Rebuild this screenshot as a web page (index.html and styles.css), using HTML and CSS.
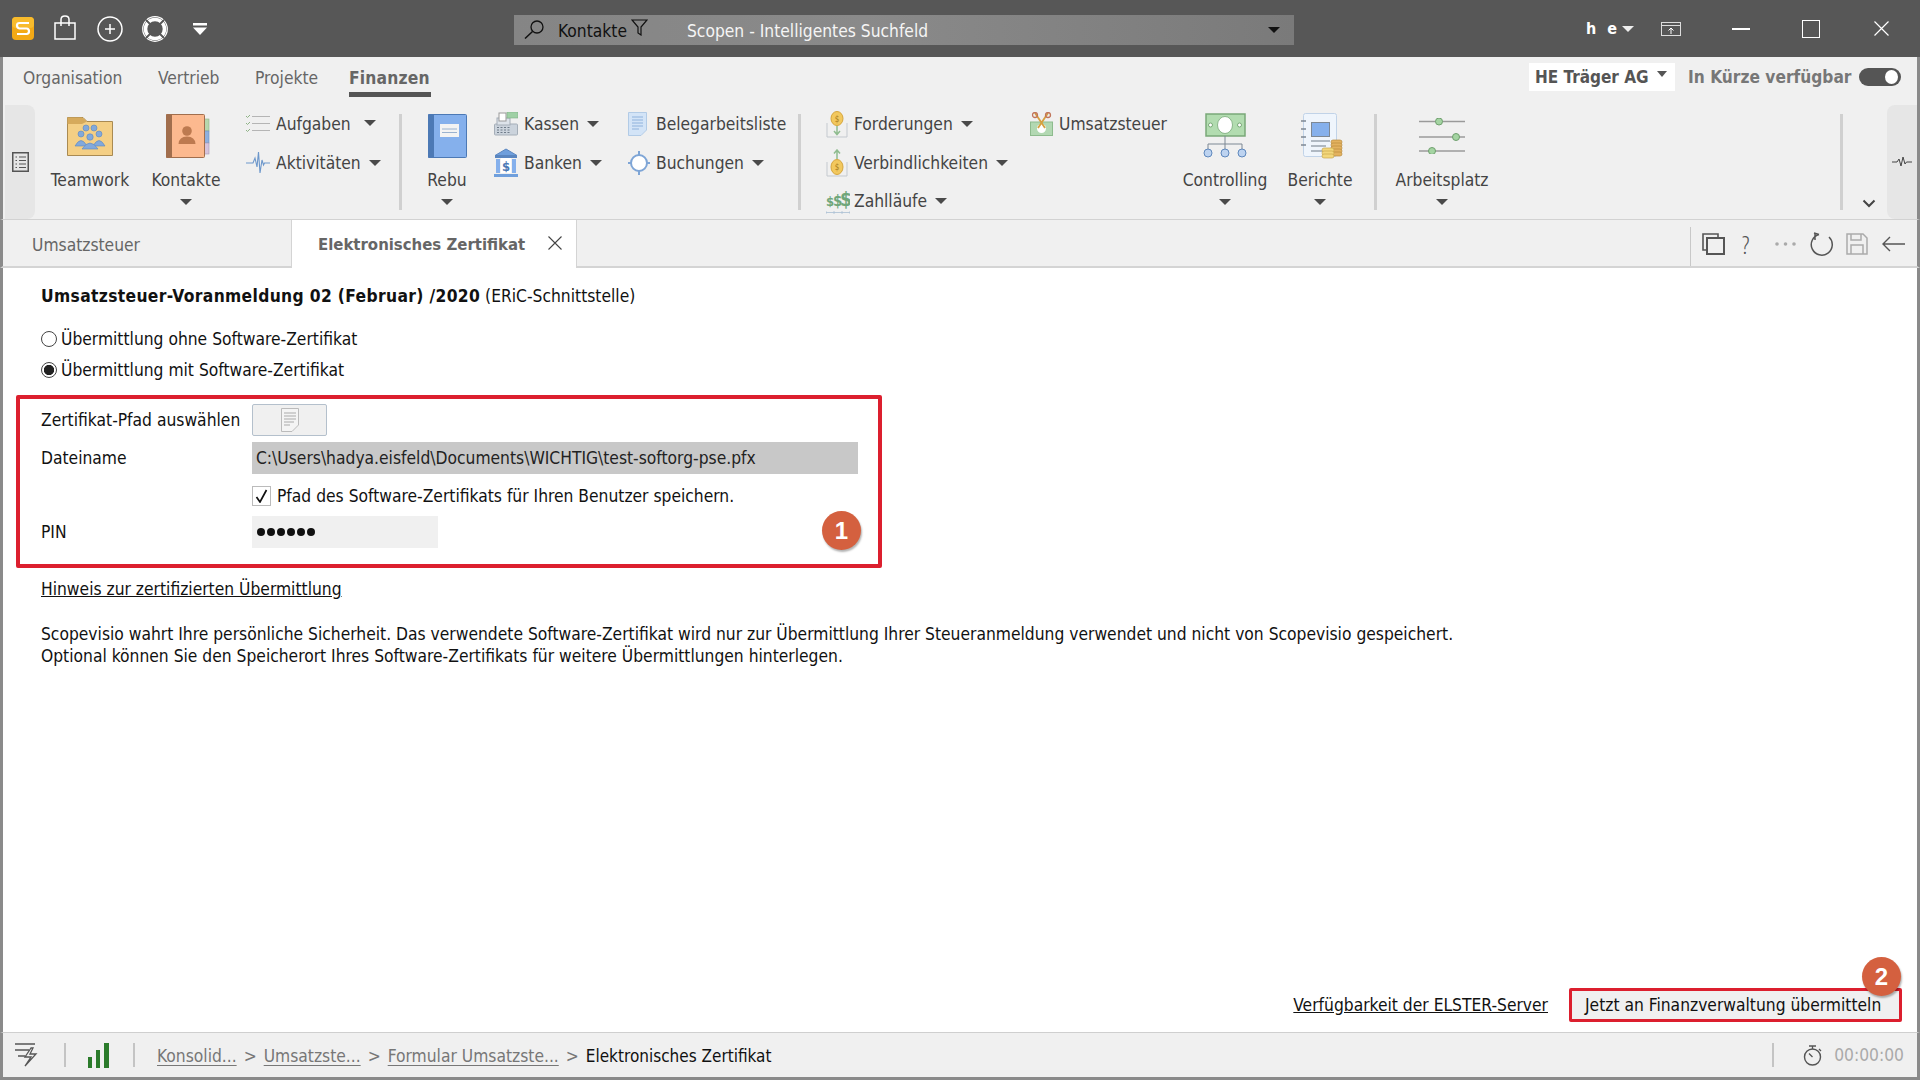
FILE: index.html
```html
<!DOCTYPE html>
<html lang="de">
<head>
<meta charset="utf-8">
<title>Elektronisches Zertifikat</title>
<link rel="stylesheet" href="styles.css">
</head>
<body>
<div class="app">
  <header class="titlebar">
    <svg class="t-logo" width="22" height="23" viewBox="0 0 22 23"><rect x="0" y="0" width="22" height="23" rx="4" fill="#f3a916"/><rect x="0" y="0" width="22" height="11" rx="4" fill="#f8bb2c"/><path d="M17 6H7.500Q5 6 5 8.500T7.500 11.500H14.500Q17 11.500 17 14.200T14.500 17H5" fill="none" stroke="#fff" stroke-width="2.200"/></svg>
    <svg class="t-bag" width="22" height="25" viewBox="0 0 22 25"><path d="M1 8H21V24H1Z M7 11V4.500Q7 1 11 1T15 4.500V11" fill="none" stroke="#fff" stroke-width="1.500"/></svg>
    <svg class="t-plus" width="26" height="26" viewBox="0 0 26 26"><circle cx="13" cy="13" r="12" fill="none" stroke="#fff" stroke-width="1.500"/><path d="M13 8V18M8 13H18" stroke="#fff" stroke-width="1.500"/></svg>
    <svg class="t-buoy" width="26" height="26" viewBox="0 0 26 26"><circle cx="13" cy="13" r="9.500" fill="none" stroke="#fff" stroke-width="3.600"/><circle cx="13" cy="13" r="12.300" fill="none" stroke="#fff" stroke-width="1.200"/><path d="M4 4L9 9M22 4L17 9M4 22L9 17M22 22L17 17" stroke="#575757" stroke-width="1.800"/></svg>
    <svg class="t-drop" width="14" height="12" viewBox="0 0 14 12"><rect x="0" y="0" width="14" height="2.500" fill="#fff"/><path d="M0 4.500H14L7 12Z" fill="#fff"/></svg>
    <div class="search">
      <svg class="s-glass" width="21" height="19" viewBox="0 0 21 19"><circle cx="13" cy="7" r="6" fill="none" stroke="#111" stroke-width="1.300"/><path d="M8.500 11.500L1 18.500" stroke="#111" stroke-width="1.500"/></svg>
      <span class="s-scope">Kontakte</span>
      <svg class="s-filter" width="17" height="17" viewBox="0 0 17 17"><path d="M1 1H16L10 8V16L7 14V8Z" fill="none" stroke="#111" stroke-width="1.200"/></svg>
      <span class="s-hint">Scopen - Intelligentes Suchfeld</span>
      <span class="caret caret-black s-caret"></span>
    </div>
    <div class="user">h e</div>
    <span class="caret caret-white user-caret"></span>
    <svg class="t-mon" width="20" height="14" viewBox="0 0 20 14"><rect x="0.500" y="0.500" width="19" height="13" fill="none" stroke="#ddd"/><path d="M0 3.500H20" stroke="#ddd"/><path d="M10 12V6M7.500 8.500L10 6L12.500 8.500" fill="none" stroke="#fff"/></svg>
    <svg class="t-min" width="18" height="2" viewBox="0 0 18 2"><rect width="18" height="2" fill="#fff"/></svg>
    <svg class="t-max" width="18" height="18" viewBox="0 0 18 18"><rect x="0.500" y="0.500" width="17" height="17" fill="none" stroke="#fff"/></svg>
    <svg class="t-close" width="15" height="15" viewBox="0 0 15 15"><path d="M0.500 0.500L14.500 14.500M14.500 0.500L0.500 14.500" stroke="#fff" stroke-width="1.200"/></svg>
  </header>

  <nav class="menubar">
    <a class="menu m-org">Organisation</a>
    <a class="menu m-ver">Vertrieb</a>
    <a class="menu m-pro">Projekte</a>
    <a class="menu m-fin active">Finanzen</a>
    <div class="company">HE Träger AG<span class="caret caret-gray company-caret"></span></div>
    <span class="soon">In Kürze verfügbar</span>
    <span class="toggle"><i></i></span>
  </nav>

  <section class="ribbon">
    <div class="pill pill-left">
      <svg width="17" height="20" viewBox="0 0 17 20"><rect x="0.750" y="0.750" width="15.500" height="18.500" fill="none" stroke="#555" stroke-width="1.500"/><path d="M3.500 5H5M7 5H14M3.500 8.500H5M7 8.500H14M3.500 12H5M7 12H14M3.500 15.500H5M7 15.500H14" stroke="#555"/></svg>
    </div>
    <div class="big b-team">
      <div class="big-icon"><svg width="46" height="39" viewBox="0 0 46 39"><path d="M0.500 38.500V0.500H16L20 4.500H45.500V38.500Z" fill="#f4cf85" stroke="#a98a52"/><path d="M0.500 0.500H15L20 4.500 L15 7H0.500Z" fill="#d6aa5c"/><g fill="#82a9db" stroke="#5d86bd" stroke-width="0.600"><circle cx="19" cy="11" r="3"/><circle cx="27" cy="11" r="3"/><circle cx="14" cy="17" r="3"/><circle cx="32" cy="17" r="3"/><circle cx="23" cy="20" r="3.200"/><path d="M8 29Q14 18 20 29Z"/><path d="M26 29Q32 18 38 29Z"/><path d="M15 32Q23 20 31 32Z"/></g></svg></div>
      <span class="big-label">Teamwork</span>
    </div>
    <div class="big b-kont">
      <div class="big-icon shift"><svg width="44" height="44" viewBox="0 0 44 44"><rect x="38" y="5" width="5" height="12" fill="#b7d7ae" stroke="#8fb386" stroke-width="0.600"/><rect x="38" y="17" width="5" height="12" fill="#8fb0de" stroke="#6f8fbf" stroke-width="0.600"/><rect x="38" y="29" width="5" height="11" fill="#d5c3dd" stroke="#a897b3" stroke-width="0.600"/><rect x="0.500" y="0.500" width="38" height="43" rx="1" fill="#fcb98f" stroke="#a16e4d"/><rect x="0" y="0" width="6" height="44" rx="1" fill="#a16e4d"/><circle cx="21" cy="17" r="4.800" fill="#bd7a50"/><path d="M12.500 30Q13 22.500 21 22.500T29.500 30Z" fill="#bd7a50"/></svg></div>
      <span class="big-label">Kontakte</span>
      <span class="caret caret-dark big-caret"></span>
    </div>
    <div class="col c-auf">
      <div class="small"><svg class="ico" width="24" height="20" viewBox="0 0 24 20"><path d="M6 2.500H24M6 9.500H24M6 16.500H24" stroke="#b5b5b5"/><path d="M0 2L1.500 3.500L4 1M0 9L1.500 10.500L4 8M0 16L1.500 17.500L4 15" fill="none" stroke="#8fb386"/></svg><span>Aufgaben</span><span class="caret caret-dark wide"></span></div>
      <div class="small"><svg class="ico" width="24" height="24" viewBox="0 0 24 24"><path d="M0 12H7L9 7L11 16L12.500 1L14 22L16 9L17.500 14L18.500 12H24" fill="none" stroke="#6c97cb" stroke-width="1.100"/></svg><span>Aktivitäten</span><span class="caret caret-dark"></span></div>
    </div>
    <div class="sep sep-a"></div>
    <div class="big b-rebu">
      <div class="big-icon"><svg width="39" height="44" viewBox="0 0 39 44"><rect x="0.500" y="0.500" width="38" height="43" rx="1" fill="#85b0ec" stroke="#4c79b5"/><rect x="0" y="0" width="6" height="44" rx="1" fill="#4c79b5"/><rect x="12" y="10" width="19" height="13" fill="#f3f3f3"/><path d="M14 15H29M14 18.500H29" stroke="#9ab2cf"/></svg></div>
      <span class="big-label">Rebu</span>
      <span class="caret caret-dark big-caret"></span>
    </div>
    <div class="col c-kas">
      <div class="small"><svg class="ico" width="24" height="24" viewBox="0 0 24 24"><rect x="0.500" y="12" width="23" height="11" rx="1" fill="#cbd3dc" stroke="#a5aeb8"/><rect x="3" y="6" width="13" height="7" fill="#dde3ea" stroke="#a5aeb8"/><rect x="5" y="1" width="7" height="8" fill="#fff" stroke="#999"/><rect x="13" y="0" width="11" height="6" fill="#9fd0a5" stroke="#7fae85" stroke-width="0.600"/><path d="M3 15.500H16M3 18H16M3 20.500H16" stroke="#6f7c8a" stroke-dasharray="2 1.500"/></svg><span>Kassen</span><span class="caret caret-dark"></span></div>
      <div class="small"><svg class="ico" width="24" height="30" viewBox="0 0 24 30"><path d="M1 7.500L12 1L23 7.500Z" fill="#6f9fdc" stroke="#5a86c0"/><rect x="1" y="8" width="22" height="2" fill="#5a86c0"/><rect x="2" y="11" width="4" height="14" fill="#85b0ec"/><rect x="18" y="11" width="4" height="14" fill="#85b0ec"/><rect x="7" y="10" width="10" height="15" fill="#fff"/><rect x="0" y="26" width="24" height="3" fill="#6f9fdc"/><text x="12" y="23" class="ico-dollar">$</text></svg><span>Banken</span><span class="caret caret-dark"></span></div>
    </div>
    <div class="col c-bel">
      <div class="small"><svg class="ico ico-beleg" width="19" height="24" viewBox="0 0 19 24"><path d="M0.500 0.500H18.500V18L13 23.500H0.500Z" fill="#d3e4f7" stroke="#b2cbe6"/><path d="M4 5H15M4 8H15M4 11H15M4 14H15M4 17H11" stroke="#8fb2dc"/></svg><span>Belegarbeitsliste</span></div>
      <div class="small"><svg class="ico" width="22" height="24" viewBox="0 0 22 24"><circle cx="11" cy="12" r="8" fill="#fff" stroke="#7ea5d6" stroke-width="2"/><path d="M11 0V4M11 20V24M0 12H4M18 12H22" stroke="#7ea5d6" stroke-width="2"/></svg><span>Buchungen</span><span class="caret caret-dark"></span></div>
    </div>
    <div class="sep"></div>
    <div class="col c-for">
      <div class="small"><svg class="ico" width="22" height="27" viewBox="0 0 22 27"><path d="M1 12V26H21V12" fill="none" stroke="#c4c9cf"/><ellipse cx="11" cy="7.500" rx="6" ry="7" fill="#f2c85e" stroke="#d6a53c"/><text x="11" y="10.500" class="ico-coin">$</text><path d="M11 15V23M8 20L11 23.500L14 20" fill="none" stroke="#8fbc8f" stroke-width="1.500"/></svg><span>Forderungen</span><span class="caret caret-dark"></span></div>
      <div class="small"><svg class="ico" width="22" height="28" viewBox="0 0 22 28"><path d="M1 13V27H21V13" fill="none" stroke="#c4c9cf"/><ellipse cx="11" cy="18" rx="6" ry="7.500" fill="#f2c85e" stroke="#d6a53c"/><text x="11" y="21" class="ico-coin">$</text><path d="M11 10V1M8 4.500L11 1L14 4.500" fill="none" stroke="#8fbc8f" stroke-width="1.500"/></svg><span>Verbindlichkeiten</span><span class="caret caret-dark"></span></div>
      <div class="small"><svg class="ico ico-zahl" width="24" height="27" viewBox="0 0 24 27"><text x="0" y="18" class="ico-cash s1">$</text><text x="7" y="18" class="ico-cash s2">$</text><text x="14" y="18" class="ico-cash s3">$</text><path d="M0 24.500H24M0 23V26M8 23V26M16 23V26M24 23V26" stroke="#a9bfd3" stroke-width="0.800"/></svg><span>Zahlläufe</span><span class="caret caret-dark"></span></div>
    </div>
    <div class="col c-ums">
      <div class="small"><svg class="ico" width="23" height="24" viewBox="0 0 23 24"><rect x="0.500" y="10" width="22" height="13.500" fill="#b2d8b2" stroke="#8dbb8d"/><circle cx="11.500" cy="16.500" r="4.500" fill="#fff"/><path d="M5 1L15 16M18 1L8 16" stroke="#d6a040" stroke-width="1.800"/><circle cx="5" cy="3" r="2.500" fill="none" stroke="#c1745a" stroke-width="1.300"/><circle cx="18" cy="3" r="2.500" fill="none" stroke="#c1745a" stroke-width="1.300"/></svg><span>Umsatzsteuer</span></div>
    </div>
    <div class="big b-con">
      <div class="big-icon"><svg width="44" height="46" viewBox="0 0 44 46"><rect x="3" y="1" width="39" height="22" fill="#b2dcb0" stroke="#79a878" stroke-width="1.500"/><ellipse cx="22" cy="12" rx="7.500" ry="8.500" fill="#fff" stroke="#79a878" stroke-width="0.800"/><circle cx="7.500" cy="12" r="2" fill="#fff" stroke="#79a878"/><circle cx="36.500" cy="12" r="2" fill="#fff" stroke="#79a878"/><path d="M22 23V37M5 37V31H39V37" fill="none" stroke="#7d8894"/><g fill="#bdd3f0" stroke="#5f88bd"><circle cx="5" cy="40" r="4"/><circle cx="22" cy="40" r="4"/><circle cx="39" cy="40" r="4"/></g></svg></div>
      <span class="big-label">Controlling</span>
      <span class="caret caret-dark big-caret"></span>
    </div>
    <div class="big b-ber">
      <div class="big-icon shift"><svg width="42" height="46" viewBox="0 0 42 46"><rect x="2.500" y="0.500" width="33" height="43" rx="2" fill="#eff5fc" stroke="#c1d3e8"/><path d="M0 8H5M0 16H5M0 24H5M0 32H5" stroke="#7d8894" stroke-width="1.300"/><rect x="10.500" y="9.500" width="18" height="14" fill="#85b0ec" stroke="#7d8894"/><path d="M10 28H29M10 33H25M10 38H22" stroke="#9aa4af" stroke-width="1.300"/><g fill="#e3b25f" stroke="#b98b3e" stroke-width="0.700"><rect x="30" y="27" width="11" height="4" rx="2"/><rect x="30" y="30" width="11" height="4" rx="2"/><rect x="30" y="33" width="11" height="4" rx="2"/><rect x="30" y="36" width="11" height="4" rx="2"/><rect x="30" y="39" width="11" height="4" rx="2"/></g><g fill="#f3d77b" stroke="#caa74a" stroke-width="0.700"><rect x="21" y="35" width="12" height="4" rx="2"/><rect x="21" y="38" width="12" height="4" rx="2"/><rect x="21" y="41" width="12" height="4" rx="2"/></g></svg></div>
      <span class="big-label">Berichte</span>
      <span class="caret caret-dark big-caret"></span>
    </div>
    <div class="sep sep-b"></div>
    <div class="big b-arb">
      <div class="big-icon"><svg width="46" height="36" viewBox="0 0 46 36"><path d="M0 3.500H46M0 19H46M0 33H46" stroke="#9a9a9a" stroke-width="1.500"/><g fill="#a4d4a2" stroke="#6f9f6e"><circle cx="20" cy="3.500" r="3.500"/><circle cx="37" cy="19" r="3.500"/><circle cx="13" cy="33" r="3.500"/></g></svg></div>
      <span class="big-label">Arbeitsplatz</span>
      <span class="caret caret-dark big-caret"></span>
    </div>
    <div class="sep sep-c"></div>
    <svg class="chev" width="14" height="9" viewBox="0 0 14 9"><path d="M1.500 1.500L7 7L12.500 1.500" fill="none" stroke="#444" stroke-width="2"/></svg>
    <div class="pill pill-right">
      <svg width="20" height="12" viewBox="0 0 20 12"><path d="M0 6H5L7 3L9 10L11 1L13 8L14.500 6H20" fill="none" stroke="#444"/></svg>
    </div>
  </section>

  <div class="tabbar">
    <div class="tab">Umsatzsteuer</div>
    <div class="tab tab-active">Elektronisches Zertifikat
      <svg class="tab-x" width="14" height="14" viewBox="0 0 14 14"><path d="M0.500 0.500L13.500 13.500M13.500 0.500L0.500 13.500" stroke="#444" stroke-width="1.100"/></svg>
    </div>
    <div class="tools">
      <svg class="tool" width="23" height="22" viewBox="0 0 23 22"><path d="M4 17H1V1H16V4" fill="none" stroke="#555" stroke-width="1.600"/><rect x="5" y="5" width="17" height="16" fill="none" stroke="#555" stroke-width="2"/></svg>
      <span class="tool-q">?</span>
      <svg class="tool-dots" width="21" height="4" viewBox="0 0 21 4"><circle cx="2" cy="2" r="1.800" fill="#aaa"/><circle cx="10.500" cy="2" r="1.800" fill="#aaa"/><circle cx="19" cy="2" r="1.800" fill="#aaa"/></svg>
      <svg class="tool-r" width="24" height="24" viewBox="0 0 24 24"><path d="M9 2.500A10.500 10.500 0 1 0 19 5M9 2.500L4 1M5 1L5 8" fill="none" stroke="#555" stroke-width="1.500"/></svg>
      <svg class="tool-s" width="22" height="22" viewBox="0 0 22 22"><path d="M1 1H17L21 5V21H1Z M5 1V7H15V1 M5 21V12H17V21" fill="none" stroke="#aaa" stroke-width="1.500"/></svg>
      <svg class="tool-b" width="23" height="16" viewBox="0 0 23 16"><path d="M8 1L1 8L8 15M1 8H23" fill="none" stroke="#555" stroke-width="1.400"/></svg>
    </div>
  </div>

  <main class="content">
    <h1 class="heading"><b>Umsatzsteuer-Voranmeldung 02 (Februar) /2020</b> (ERiC-Schnittstelle)</h1>
    <div class="radio r-one"><i class="dot"></i>Übermittlung ohne Software-Zertifikat</div>
    <div class="radio r-two"><i class="dot on"></i>Übermittlung mit Software-Zertifikat</div>

    <div class="certbox">
      <div class="row row-path"><label>Zertifikat-Pfad auswählen</label>
        <button class="pick"><svg width="18" height="24" viewBox="0 0 18 24"><path d="M0.500 0.500H17.500V17L11 23.500H0.500Z" fill="#f4f4f4" stroke="#bbb"/><path d="M3 5H15M3 8H15M3 11H15M3 14H13M3 17H9" stroke="#aaa"/></svg></button>
      </div>
      <div class="row row-file"><label>Dateiname</label><div class="field file">C:\Users\hadya.eisfeld\Documents\WICHTIG\test-softorg-pse.pfx</div></div>
      <div class="row row-check"><label></label><span class="check"><svg width="13" height="14" viewBox="0 0 13 14"><path d="M1.500 8L5 13L11.500 1" fill="none" stroke="#111" stroke-width="1.700"/></svg></span><span>Pfad des Software-Zertifikats für Ihren Benutzer speichern.</span></div>
      <div class="row row-pin"><label>PIN</label><div class="field pin"><i></i><i></i><i></i><i></i><i></i><i></i></div></div>
      <span class="badge badge-one">1</span>
    </div>

    <a class="hint">Hinweis zur zertifizierten Übermittlung</a>
    <p class="para">Scopevisio wahrt Ihre persönliche Sicherheit. Das verwendete Software-Zertifikat wird nur zur Übermittlung Ihrer Steueranmeldung verwendet und nicht von Scopevisio gespeichert.<br>Optional können Sie den Speicherort Ihres Software-Zertifikats für weitere Übermittlungen hinterlegen.</p>

    <div class="actions">
      <a class="elster">Verfügbarkeit der ELSTER-Server</a>
      <div class="submit">Jetzt an Finanzverwaltung übermitteln<span class="badge badge-two">2</span></div>
    </div>
  </main>

  <footer class="status">
    <svg class="st-flash" width="24" height="24" viewBox="0 0 24 24"><path d="M0 1H20M0 7H14M3 13H10" stroke="#555" stroke-width="1.400"/><path d="M16 5L10 14H16L10 23L21 11H15L18 5Z" fill="none" stroke="#555" stroke-width="1.300"/></svg>
    <span class="st-sep s-one"></span>
    <svg class="st-bars" width="21" height="25" viewBox="0 0 21 25"><rect x="0" y="14" width="4" height="11" fill="#2b7b2b"/><rect x="8" y="7" width="4" height="18" fill="#2b7b2b"/><rect x="16" y="0" width="5" height="25" fill="#2b7b2b"/></svg>
    <span class="st-sep s-two"></span>
    <nav class="crumbs">
      <a>Konsolid...</a><span class="gt">&gt;</span><a>Umsatzste...</a><span class="gt">&gt;</span><a>Formular Umsatzste...</a><span class="gt">&gt;</span><b>Elektronisches Zertifikat</b>
    </nav>
    <span class="st-sep s-three"></span>
    <svg class="st-timer" width="20" height="21" viewBox="0 0 20 21"><circle cx="9.500" cy="12" r="8" fill="none" stroke="#555" stroke-width="1.400"/><path d="M6 1H13M9.500 1V4M16 4L18 6M6 8.500L9.500 12" fill="none" stroke="#555" stroke-width="1.300"/></svg>
    <span class="timer">00:00:00</span>
  </footer>
</div>
</body>
</html>
```

FILE: styles.css
```css
* { box-sizing: border-box; }
html, body { margin: 0; height: 100%; overflow: hidden; }
body { font-family: "DejaVu Sans Condensed", "DejaVu Sans", sans-serif; font-stretch: condensed; font-size: 17.300px; color: #111; background: #fff; }
.app { height: 1080px; display: flex; flex-direction: column; border-bottom: 3px solid #8a8a8a; }

.caret { display: inline-block; width: 0; height: 0; border-left: 6px solid transparent; border-right: 6px solid transparent; border-top: 6px solid #444; flex: none; }
.caret-dark { border-top-color: #4a4a4a; }
.caret-black { border-top-color: #111; }
.caret-white { border-top-color: #eee; }
.caret-gray { border-top-color: #555; }

/* title bar */
.titlebar { height: 57px; flex: none; background: #575757; display: flex; align-items: center; padding-left: 12px; }
.t-logo { margin-right: 20px; }
.t-bag { margin-right: 21px; margin-top: -2px; }
.t-plus { margin-right: 19px; }
.t-buoy { margin-right: 25px; }
.t-drop { margin-right: 307px; }
.search { width: 780px; height: 30px; background: linear-gradient(90deg, #858585 0%, #8a8a8a 45%, #7a7a7a 100%); display: flex; align-items: center; position: relative; padding-left: 10px; margin-top: 2px; }
.s-scope { margin-left: 13px; color: #111; width: 73px; white-space: nowrap; padding-top: 2px; }
.s-filter { margin-right: 39px; margin-top: -4px; }
.s-hint { color: #f5f5f5; padding-top: 2px; }
.s-caret { margin-left: auto; margin-right: 14px; }
.user { margin-left: 292px; color: #fff; font-weight: 700; letter-spacing: 3px; width: 34px; white-space: nowrap; font-size: 16px; }
.user-caret { margin-left: 2px; }
.t-mon { margin-left: 27px; }
.t-min { margin-left: 51px; }
.t-max { margin-left: 52px; }
.t-close { margin-left: 54px; }

/* menu */
.menubar { height: 48px; flex: none; background: #f0f0f0; display: flex; align-items: flex-start; padding-left: 20px; border-left: 3px solid #8a8a8a; border-right: 3px solid #8a8a8a; position: relative; }
.menu { color: #666; height: 39px; line-height: 41px; margin-top: 1px; white-space: nowrap; }
.m-org { width: 135px; }
.m-ver { width: 97px; }
.m-pro { width: 94px; }
.menu.active { font-weight: 700; color: #666; border-bottom: 5px solid #555; letter-spacing: .2px; }
.m-fin { width: 82px; }
.company { margin-left: auto; margin-top: 6px; width: 146px; height: 28px; background: #fff; color: #555; font-weight: 700; font-size: 17px; line-height: 28px; padding-left: 6px; white-space: nowrap; display: flex; align-items: center; }
.company-caret { margin-left: 8px; margin-top: -6px; border-left-width: 5px; border-right-width: 5px; }
.soon { margin-left: 13px; margin-top: 6px; color: #777; font-weight: 700; font-size: 17.200px; line-height: 28px; width: 171px; white-space: nowrap; }
.toggle { width: 42px; height: 18px; background: #555; border-radius: 9px; margin-top: 11px; margin-right: 16px; position: relative; display: block; }
.toggle i { position: absolute; right: 3px; top: 2px; width: 13px; height: 14px; background: #fff; border-radius: 50%; }

/* ribbon */
.ribbon { height: 115px; flex: none; background: #f0f0f0; display: flex; border-left: 3px solid #8a8a8a; border-right: 3px solid #8a8a8a; border-bottom: 1px solid #d2d2d2; }
.pill { width: 30px; height: 114px; background: #e6e6e6; display: flex; align-items: center; justify-content: center; flex: none; }
.pill-left { margin-left: 2px; border-radius: 0 8px 8px 0; }
.pill-right { margin-left: 11px; border-radius: 8px 0 0 8px; }
.big { display: flex; flex-direction: column; align-items: center; flex: none; color: #444; padding-top: 7px; }
.big-icon { height: 48px; display: flex; align-items: center; justify-content: center; }
.big-icon.shift { margin-left: 4px; }
.big-label { margin-top: 9px; line-height: 22px; white-space: nowrap; }
.big-caret { margin-top: 8px; }
.b-team { margin-left: 14px; width: 82px; }
.b-kont { margin-left: 15px; width: 80px; }
.b-rebu { margin-left: 15px; width: 60px; }
.b-con { width: 84px; }
.b-ber { margin-left: 21px; width: 64px; }
.b-arb { margin-left: 19px; width: 92px; }
.col { display: grid; grid-auto-rows: 38.500px; flex: none; color: #444; }
.small { display: flex; align-items: center; white-space: nowrap; }
.ico { flex: none; }
.ico-beleg { margin-right: 3px; }
.ico-zahl { margin-right: -2px; }
.c-auf { margin-left: 20px; width: 153px; }
.c-kas { margin-left: 17px; width: 134px; }
.c-bel { width: 170px; }
.c-for { margin-left: 25px; width: 204px; }
.c-ums { width: 153px; }
.small > span:first-of-type { margin-left: 6px; }
.small .caret { margin-left: 8px; }
.small .caret.wide { margin-left: 13px; margin-top: -3px; }
.sep { width: 3px; height: 96px; margin-top: 9px; background: #d0d0d0; flex: none; }
.sep-b { margin-left: 22px; }
.sep-c { margin-left: auto; }
.chev { margin-left: 19px; margin-top: 94px; flex: none; }
.ico-dollar { font-size: 13px; font-weight: 700; fill: #4c79b5; text-anchor: middle; }
.ico-coin { font-size: 8px; fill: #a97c20; text-anchor: middle; }
.ico-cash { font-weight: 700; fill: #6fa67a; }
.s1 { font-size: 13px; } .s2 { font-size: 15px; } .s3 { font-size: 19px; }

/* tabs */
.tabbar { height: 48px; flex: none; background: #f0f0f0; display: flex; border-left: 3px solid #8a8a8a; border-right: 3px solid #8a8a8a; border-bottom: 2px solid #d4d4d4; }
.tab { width: 288px; padding-left: 29px; line-height: 50px; color: #666; white-space: nowrap; }
.tab-active { height: 48px; width: 286px; background: #fff; border-left: 1px solid #d4d4d4; border-right: 1px solid #d4d4d4; font-weight: 700; font-size: 16.600px; padding-left: 26px; position: relative; }
.tab-x { position: absolute; left: 256px; top: 16px; }
.tools { margin-left: auto; width: 227px; height: 39px; margin-top: 7px; border-left: 1px solid #c8c8c8; display: flex; align-items: center; padding: 0 0 6px 11px; color: #555; }
.tool-q { font-family: "Open Sans", sans-serif; font-size: 26px; color: #555; margin-left: 17px; width: 16px; font-weight: 300; }
.tool-dots { margin-left: 17px; }
.tool-r { margin-left: 14px; }
.tool-s { margin-left: 12px; }
.tool-b { margin-left: 14px; }

/* content */
.content { flex: 1; display: flex; flex-direction: column; min-height: 0; padding: 16px 15px 0 38px; border-left: 3px solid #8a8a8a; border-right: 3px solid #8a8a8a; border-bottom: 1px solid #cfcfcf; background: #fff; }
.heading { margin: 0; font-size: inherit; font-weight: 400; line-height: 24px; white-space: nowrap; }
.heading b { letter-spacing: .35px; }
.radio { display: flex; align-items: center; line-height: 24px; }
.r-one { margin-top: 19px; }
.r-two { margin-top: 7px; }
.dot { width: 16px; height: 16px; border: 1px solid #444; border-radius: 50%; margin-right: 4px; background: #fff; display: block; flex: none; }
.dot.on { background: radial-gradient(circle, #222 0 4.800px, #fff 5.500px); }
.certbox { margin: 13px 0 0 -25px; width: 866px; height: 173px; border: 4px solid #dc1f2e; border-radius: 2px; padding: 5px 0 0 21px; position: relative; }
.row { display: flex; align-items: center; }
.row label { width: 211px; flex: none; }
.row-path { height: 32px; }
.pick { width: 75px; height: 32px; padding: 0; background: #f0f0f0; border: 1px solid #b4c0cc; border-radius: 2px; display: flex; align-items: center; justify-content: center; }
.row-file { height: 32px; margin-top: 6px; }
.field { height: 32px; padding-left: 4px; display: flex; align-items: center; white-space: nowrap; }
.file { width: 606px; background: #c8c8c8; color: #222; }
.row-check { height: 22px; margin-top: 11px; }
.check { width: 19px; height: 20px; border: 1px solid #bbb; display: flex; align-items: center; justify-content: center; margin-right: 6px; flex: none; }
.row-pin { margin-top: 9px; }
.pin { width: 186px; background: #f0f0f0; gap: 2px; padding-left: 5px; }
.pin i { width: 8px; height: 8px; background: #111; border-radius: 50%; display: block; }
.badge { position: absolute; display: flex; align-items: center; justify-content: center; border-radius: 50%; background: #d4603f; color: #fff; font-family: "Liberation Sans", sans-serif; font-weight: 700; box-shadow: 1px 2px 2px rgba(0,0,0,.3); }
.badge-one { width: 39px; height: 39px; right: 17px; bottom: 14px; font-size: 24px; }
.hint { margin-top: 9px; line-height: 24px; text-decoration: underline; align-self: flex-start; }
.para { margin: 22px 0 0; line-height: 22px; white-space: nowrap; }
.actions { margin-top: auto; margin-bottom: 10px; display: flex; align-items: center; justify-content: flex-end; }
.elster { text-decoration: underline; margin-right: 21px; white-space: nowrap; }
.submit { width: 333px; height: 34px; background: #f0f0f0; border: 3px solid #dc1f2e; border-radius: 2px; padding-left: 13px; line-height: 28px; white-space: nowrap; position: relative; }
.badge-two { width: 39px; height: 39px; right: -2px; top: -34px; font-size: 24px; }

/* status */
.status { height: 44px; flex: none; background: #f0f0f0; display: flex; align-items: center; border-left: 3px solid #8a8a8a; border-right: 3px solid #8a8a8a; }
.st-flash { margin-left: 12px; }
.st-sep { width: 2px; height: 24px; background: #c4c4c4; flex: none; display: block; }
.s-one { margin-left: 25px; }
.st-bars { margin-left: 22px; }
.s-two { margin-left: 24px; }
.crumbs { margin-left: 22px; padding-top: 2px; display: flex; align-items: center; white-space: nowrap; color: #777; }
.crumbs a { text-decoration: underline; text-underline-offset: 3px; }
.crumbs b { font-weight: 400; color: #111; font-size: 17px; }
.gt { margin: 0 7px; }
.s-three { margin-left: auto; }
.st-timer { margin-left: 29px; }
.timer { margin-left: 11px; margin-right: 13px; color: #aaa; white-space: nowrap; }
```
